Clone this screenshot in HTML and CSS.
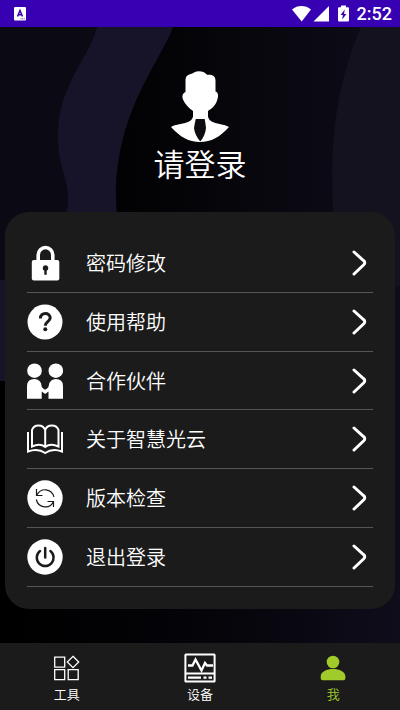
FILE: index.html
```html
<!DOCTYPE html>
<html lang="zh-CN">
<head>
<meta charset="utf-8">
<meta name="viewport" content="width=device-width, initial-scale=1">
<title>我</title>
<link rel="stylesheet" href="styles.css">
</head>
<body>
<header class="status">
  <svg class="status-app" viewBox="0 0 12 14" aria-hidden="true"><rect width="12" height="13.500" rx="1" fill="#fff"/><path d="M3.500 9.500 6 3.500l2.500 6M4.300 7.800h3.400" fill="none" stroke="#3700b3" stroke-width="1.500"/><path d="M6.500 11.800h4.500" stroke="#3700b3" stroke-width=".8" stroke-dasharray="1 .6"/></svg>
  <div class="status-right">
    <svg class="status-icons" viewBox="0 0 58 18" aria-hidden="true" fill="#fff"><path d="M0 4.500C5.500-.1 13.500-.1 19 4.500L9.700 16.500Z"/><path d="M21.500 16.500 37 1v15.500Z"/><path fill-rule="evenodd" d="M49 .5h5v1.700h2q1 0 1 1v12.300q0 1-1 1h-9q-1 0-1-1V3.200q0-1 1-1h2ZM52.700 4.500 48.600 10h2.300l-.7 4.500L54.400 9h-2.300Z"/></svg>
    <span>2:52</span>
  </div>
</header>
<main class="screen">
  <svg class="backdrop" viewBox="0 0 400 616" preserveAspectRatio="none" aria-hidden="true">
    <defs>
      <linearGradient id="night" gradientUnits="userSpaceOnUse" x1="0" y1="0" x2="400" y2="0"><stop offset=".3" stop-color="#020204"/><stop offset=".5" stop-color="#050509"/><stop offset=".75" stop-color="#0a0912"/><stop offset="1" stop-color="#0e0c18"/></linearGradient>
      <linearGradient id="floor"><stop offset="0" stop-color="#000"/><stop offset=".5" stop-color="#040409"/><stop offset="1" stop-color="#0f0d1b"/></linearGradient>
    </defs>
    <path d="M0 0h400v616H0Z" fill="url(#night)"/>
    <path d="M0 353h400v263H0Z" fill="url(#floor)"/>
    <path d="M0 0h130v253H0Z" fill="#0b0914"/>
    <path d="M97 0C90 30 58 58 58 108c0 34 10 40 10 65 0 38-38 80-68 80v101c60 0 128-60 128-110 0-30-12-40-12-75C116 83 162 33 173 0Z" fill="#17142a"/>
    <path d="M173 0C162 33 116 83 116 169c0 35 12 45 12 75h45V0Z" fill="url(#night)"/>
    <path d="M0 253h30v101H0Z" fill="#17142a"/>
    <path d="M361 0C330 72 330 140 334 200l30 100c10-25 20-35 36-41V0Z" fill="#151220"/>
  </svg>
  <a class="profile" href="#login">
    <svg class="avatar" viewBox="0 0 60 72" aria-hidden="true"><path fill="#fff" d="M16 6.500C17.500 3 21 3.500 24 1.500c4-2 10-1.500 13 2.300 6-.3 8.500 1.200 8.500 6.200v10.500c3.500 1 2.800 5.500 1.200 10-2 5-5.200 7-8.700 9.500v5.500c2 8.500 13 6 21 10.500C50 66 41 71 30 71S10 66 1 56c8-4.500 20-2 22-10.500V40c-4-3-8-6.500-10-11.500-1.300-3.500-.5-6 2.500-7.500V11c0-2 0-3 .5-4.500Z"/><path fill="#0d0d11" d="M25.700 48h9l.8 5 .5 4c-.5 5-2.500 10-5.700 13.500C27 67 24.500 62 24 57l.7-4Z"/></svg>
    <span>请登录</span>
  </a>
  <nav class="card" aria-label="账户">
    <a class="row" href="#password"><svg class="icon" viewBox="0 0 36 36"><path d="M11.200 16V10a7.300 7.500 0 0 1 14.600 0v6" fill="none" stroke="#fff" stroke-width="3.600"/><rect x="4.800" y="15" width="27.500" height="20.500" rx="2" fill="#fff"/><path d="M18.500 20.200a2.900 2.900 0 0 0-1.200 5.500v4h2.400v-4a2.900 2.900 0 0 0-1.200-5.500Z" fill="#1b1b1b"/></svg><span>密码修改</span><svg class="chevron" viewBox="0 0 16 26"><path d="m3 2 9.500 8.500q2.500 2 0 4.500L3 24"/></svg></a>
    <a class="row" href="#help"><svg class="icon" viewBox="0 0 36 36"><circle cx="18" cy="18" r="17.500" fill="#fff"/><path d="M13.400 14.500c0-6.800 9.800-6.300 9.800-.7 0 4-4.900 3.800-4.900 8" fill="none" stroke="#1b1b1b" stroke-width="3"/><circle cx="18.300" cy="25.300" r="2" fill="#1b1b1b"/></svg><span>使用帮助</span><svg class="chevron" viewBox="0 0 16 26"><path d="m3 2 9.500 8.500q2.500 2 0 4.500L3 24"/></svg></a>
    <a class="row" href="#partners"><svg class="icon" viewBox="0 0 36 36" fill="#fff"><circle cx="7.500" cy="7.700" r="7.300"/><circle cx="28.800" cy="7.700" r="7.300"/><path d="M0 35.700V23q0-7 7.500-7 6 0 7 6.500 0 2.500 3.600 4.300Q21.700 25 21.800 22.500q1-6.500 7-6.500 7.200 0 7.200 7v12.700H21.500V28.500L18.200 31l-3.500-2.500v7.200Z"/></svg><span>合作伙伴</span><svg class="chevron" viewBox="0 0 16 26"><path d="m3 2 9.500 8.500q2.500 2 0 4.500L3 24"/></svg></a>
    <a class="row" href="#about"><svg class="icon" viewBox="0 0 36 36" fill="none" stroke="#fff" stroke-width="2"><path d="M18.200 26V9Q16.500 4.500 11.500 4.500T5 9v16.500q8-3.500 13.200.5 5.200-4 13.300-.5V9q-1.500-4.500-6.700-4.500T18.200 9"/><path d="M1 11v19.500q10-3.500 17.200 1.500 7.200-5 16.800-1.500V11"/></svg><span>关于智慧光云</span><svg class="chevron" viewBox="0 0 16 26"><path d="m3 2 9.500 8.500q2.500 2 0 4.500L3 24"/></svg></a>
    <a class="row" href="#version"><svg class="icon" viewBox="0 0 36 36"><circle cx="18" cy="18" r="17.700" fill="#fff"/><path d="M9.500 9v6.500h6M9.800 15.200c4-8 14.800-7 17.200 1.800M9.300 19.500c2 9 14 10 17.200 2M20.500 21.500h6V27" fill="none" stroke="#1b1b1b" stroke-width="1.200"/></svg><span>版本检查</span><svg class="chevron" viewBox="0 0 16 26"><path d="m3 2 9.500 8.500q2.500 2 0 4.500L3 24"/></svg></a>
    <a class="row" href="#logout"><svg class="icon" viewBox="0 0 36 36"><circle cx="18" cy="18" r="17.700" fill="#fff"/><path d="M18.200 9v9.500M13 12a8.400 8.400 0 1 0 10.400 0" fill="none" stroke="#1b1b1b" stroke-width="2.500" stroke-linecap="round"/></svg><span>退出登录</span><svg class="chevron" viewBox="0 0 16 26"><path d="m3 2 9.500 8.500q2.500 2 0 4.500L3 24"/></svg></a>
  </nav>
</main>
<nav class="tabs" aria-label="主导航">
  <a class="tab" href="#tools"><svg viewBox="0 0 32 32" fill="none" stroke="#fff" stroke-width="1.300"><path d="M3.700 5.200h10v10h-10ZM3.700 17.700h10v10h-10ZM17.200 17.700h10v10h-10ZM22 4.300l5.700 5.700-5.700 5.700-5.700-5.700Z"/></svg><span>工具</span></a>
  <a class="tab" href="#devices"><svg viewBox="0 0 32 32" fill="none" stroke="#fff" stroke-width="2"><rect x="1.400" y="2.500" width="29.200" height="27" rx=".5"/><path d="M1 21.500h30"/><path d="M4 25.700h13M19.500 25.700h3M24.500 25.700h3.500M4 13.500h4.500l3-6 6 11 3.500-7.500 2 2.500H29" stroke-width="2.300"/></svg><span>设备</span></a>
  <a class="tab tab-active" href="#me" aria-current="page"><svg viewBox="0 0 32 32" fill="#a1cb2b"><circle cx="16" cy="10" r="6.300"/><path d="M3.700 24.500c0-10 24.700-10 24.700 0v1.700q0 2-2 2H5.700q-2 0-2-2Z"/></svg><span>我</span></a>
</nav>
</body>
</html>
```

FILE: styles.css
```css
* {
  box-sizing: border-box;
}

body {
  margin: 0;
  min-height: 100vh;
  display: flex;
  flex-direction: column;
  background: #000;
  color: #fff;
  font-family: "Noto Sans CJK SC", sans-serif;
  font-weight: 350;
}

a {
  color: inherit;
  text-decoration: none;
}

svg {
  display: block;
  flex: none;
}

.status {
  display: flex;
  align-items: center;
  justify-content: space-between;
  height: 27px;
  padding: 0 8px 0 14px;
  background: #3700b3;
}

.status-app {
  width: 12px;
  height: 14px;
}

.status-right {
  display: flex;
  align-items: center;
  gap: 7px;
  font-family: Roboto, sans-serif;
  font-size: 18px;
  font-weight: 500;
  line-height: 27px;
}

.status-icons {
  width: 58px;
  height: 18px;
}

.screen {
  position: relative;
  flex: 1;
  display: flex;
  flex-direction: column;
  padding: 44px 5px 34px;
}

.backdrop {
  position: absolute;
  inset: 0;
  width: 100%;
  height: 100%;
}

.profile {
  position: relative;
  align-self: center;
  display: flex;
  flex-direction: column;
  align-items: center;
  margin-bottom: 29px;
  font-size: 31px;
  line-height: 40px;
}

.avatar {
  width: 60px;
  height: 72px;
}

.card {
  position: relative;
  flex: 1;
  display: grid;
  grid-auto-rows: 1fr;
  padding: 22px;
  border-radius: 24px;
  background: #1b1b1b;
}

.row {
  display: flex;
  align-items: center;
  border-bottom: 1px solid #555;
  font-size: 20px;
  line-height: 28px;
}

.icon {
  width: 36px;
  height: 36px;
}

.row span {
  flex: 1;
  margin-left: 23px;
}

.chevron {
  width: 16px;
  height: 26px;
  margin-right: 6px;
  fill: none;
  stroke: #fff;
  stroke-width: 3;
  stroke-linecap: round;
}

.tabs {
  display: grid;
  grid-template-columns: repeat(3, 1fr);
  height: 67px;
  padding-top: 9px;
  background: #1b1b1b;
}

.tab {
  display: flex;
  flex-direction: column;
  align-items: center;
  font-size: 13px;
  line-height: 20px;
}

.tab svg {
  width: 32px;
  height: 32px;
}

.tab-active {
  color: #a1cb2b;
}
```
